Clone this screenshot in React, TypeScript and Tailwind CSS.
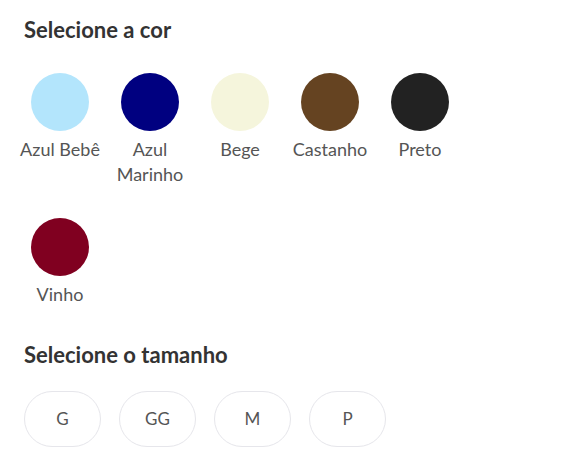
const colors = [
  { name: "Azul Bebê", hex: "bg-[#b3e5fc]" },
  { name: "Azul Marinho", hex: "bg-[#000080]" },
  { name: "Bege", hex: "bg-[#f5f5dc]" },
  { name: "Castanho", hex: "bg-[#654321]" },
  { name: "Preto", hex: "bg-[#222222]" },
  { name: "Vinho", hex: "bg-[#800020]" },
];

const sizes = ["G", "GG", "M", "P"];

export default function App() {
  return (
    <div className="min-h-screen bg-white px-6 pt-[17px] font-['Lato',sans-serif]">
      <h2 className="text-[22px] leading-[26px] font-bold text-[#333333]">
        Selecione a cor
      </h2>

      <div className="mt-[30px] -ml-1 flex flex-wrap gap-x-[10px] gap-y-[31px]">
        {colors.map((color) => (
          <button
            key={color.name}
            type="button"
            className="flex w-20 flex-col items-center"
          >
            <span className={`h-[58px] w-[58px] rounded-full ${color.hex}`} />
            <span className="mt-1.5 text-center text-[18px] leading-[25px] text-[#555555]">
              {color.name}
            </span>
          </button>
        ))}
      </div>

      <h2 className="mt-[35px] text-[22px] leading-[26px] font-bold text-[#333333]">
        Selecione o tamanho
      </h2>

      <div className="mt-[23px] flex gap-[18px]">
        {sizes.map((size) => (
          <button
            key={size}
            type="button"
            className="flex h-14 w-[77px] items-center justify-center rounded-full border border-[#e6e6eb] text-[17px] text-[#555555]"
          >
            {size}
          </button>
        ))}
      </div>
    </div>
  );
}
